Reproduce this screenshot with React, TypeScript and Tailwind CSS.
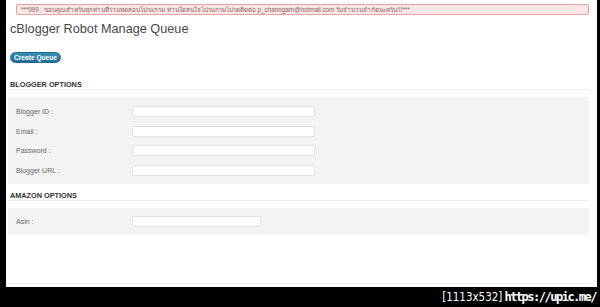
import React from "react";

const Row = ({ label, w = "w-[183px]" }: { label: string; w?: string }) => (
  <div className="flex items-center h-[11px]">
    <div className="w-[124px] pl-[8px] text-[7px] leading-[9px] text-[#666]">{label}</div>
    <div className={`${w} h-[11px] bg-white border border-[#e2e2e2] rounded-[2px]`} />
  </div>
);

export default function App() {
  return (
    <div
      className="w-[600px] h-[307px] bg-black flex flex-col overflow-hidden"
      style={{ fontFamily: '"Liberation Sans", Arial, "Noto Sans", sans-serif' }}
    >
      <div className="flex h-[287px]">
        <div className="w-[6px] shrink-0" />
        <div className="w-[591px] bg-white flex flex-col">
          <div className="mt-[4px] ml-[10px] w-[573px] h-[11px] bg-[#fde6e6] border border-[#e4a4a4] rounded-[2px] flex items-center pl-[4px] text-[6.3px] leading-[9px] text-[#8a6262] whitespace-nowrap overflow-hidden">
            ***999 : ขอบคุณสำหรับทุกท่านที่ร่วมทดสอบโปรแกรม ท่านใดสนใจโปรแกรมโปรดติดต่อ p_channgam@hotmail.com รับจำนวนจำกัดนะครับ!!!***
          </div>
          <div className="mt-[6px] ml-[4px] text-[12.7px] leading-[16px] text-[#464646]">
            cBlogger Robot Manage Queue
          </div>
          <div className="mt-[15px] ml-[4px] w-[51px] h-[11px] rounded-full bg-gradient-to-b from-[#3c8fb8] to-[#1f6f97] border border-[#1d6a90] flex items-center justify-center text-white font-bold text-[6.6px] leading-[9px]">
            Create Queue
          </div>
          <div className="mt-[18px] ml-[2px] mr-[8px] border-b border-[#ebebeb] pl-[2px] text-[7.3px] leading-[8px] font-bold text-[#333]">
            BLOGGER OPTIONS
          </div>
          <div className="mt-[7px] ml-[2px] mr-[8px] h-[87px] bg-[#f3f3f3] pt-[9px] flex flex-col gap-[8.7px]">
            <Row label="Blogger ID :" />
            <Row label="Email :" />
            <Row label="Password :" />
            <Row label="Blogger URL :" />
          </div>
          <div className="mt-[8px] ml-[2px] mr-[8px] border-b border-[#ebebeb] pl-[2px] text-[7.3px] leading-[8px] font-bold text-[#333]">
            AMAZON OPTIONS
          </div>
          <div className="mt-[7px] ml-[2px] mr-[8px] h-[27px] bg-[#f3f3f3] pt-[8px] flex flex-col">
            <Row label="Asin :" w="w-[129px]" />
          </div>
          <div className="mt-auto mb-[3px] ml-[2px] mr-[7px] border-b border-[#e8e8e8]" />
        </div>
        <div className="flex-1" />
      </div>
      <div className="h-[20px] flex items-center justify-end pr-[4px] text-white leading-[16px] whitespace-nowrap">
        <span className="text-[11.5px]" style={{ fontFamily: '"DejaVu Sans Condensed", "DejaVu Sans", sans-serif' }}>[1113x532]</span>
        <span className="text-[12px] font-bold ml-[2px]" style={{ fontFamily: '"DejaVu Sans Mono", monospace', letterSpacing: "-1.5px" }}>https://upic.me/</span>
      </div>
    </div>
  );
}
